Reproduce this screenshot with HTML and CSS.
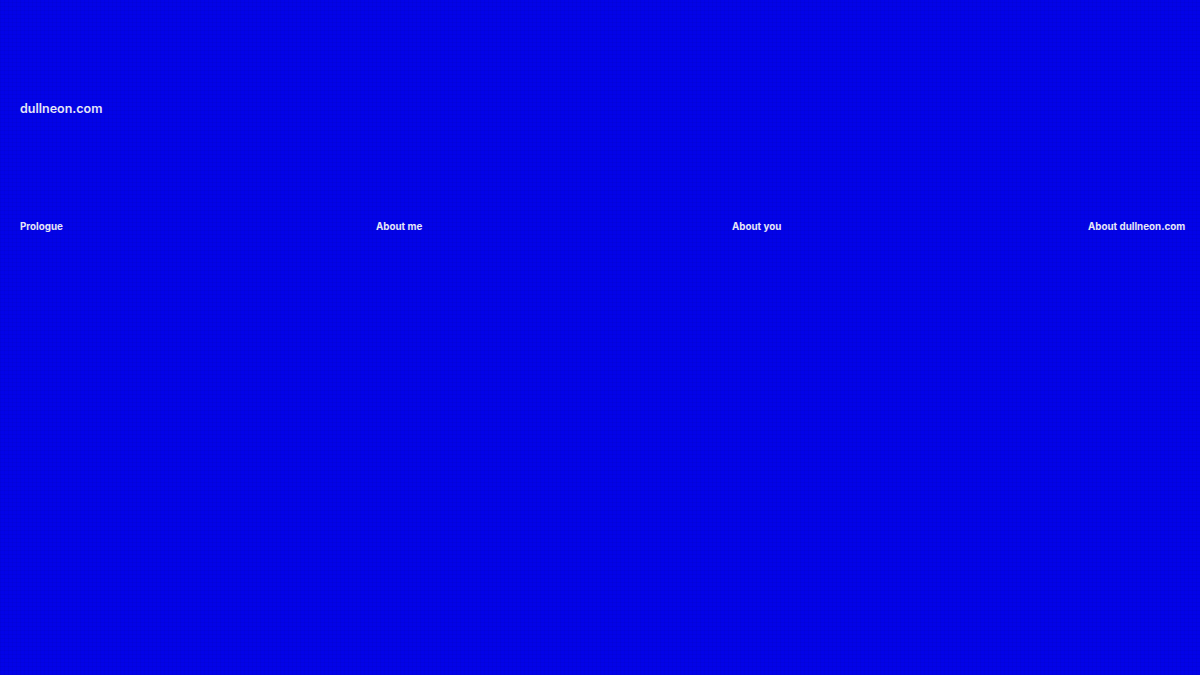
FILE: index.html
```html
<!DOCTYPE html>
<html lang="en">
<head>
<meta charset="utf-8">
<title>dullneon.com</title>
<link rel="stylesheet" href="styles.css">
</head>
<body>
<div class="page">
  <header class="site-header">
    <a class="logo" href="#">dullneon.com</a>
  </header>
  <nav class="site-nav">
    <a class="nav-item" href="#">Prologue</a>
    <a class="nav-item" href="#">About me</a>
    <a class="nav-item" href="#">About you</a>
    <a class="nav-item" href="#">About dullneon.com</a>
  </nav>
</div>
</body>
</html>
```
FILE: styles.css
```css
html, body {
  margin: 0;
  padding: 0;
  height: 100%;
}
body {
  background-color: #0303e8;
  background-image:
    repeating-linear-gradient(0deg, rgba(0,0,80,0.06) 0 1px, transparent 1px 4px),
    repeating-linear-gradient(90deg, rgba(0,0,80,0.06) 0 1px, transparent 1px 4px);
  font-family: Inter, "Noto Sans", "Liberation Sans", sans-serif;
  color: #e6e6f6;
}
.page {
  padding: 0 0 0 20px;
}
.site-header {
  padding-top: 97px;
  height: 22px;
}
.logo {
  color: #e6e6f6;
  text-decoration: none;
  font-size: 12.5px;
  font-weight: 600;
  line-height: 18px;
}
.site-nav {
  margin-top: 101px;
  display: grid;
  grid-template-columns: 356px 356px 356px 1fr;
}
.nav-item {
  color: #e6e6f6;
  text-decoration: none;
  font-size: 9.8px;
  font-weight: 700;
  line-height: 14px;
  white-space: nowrap;
}
```
